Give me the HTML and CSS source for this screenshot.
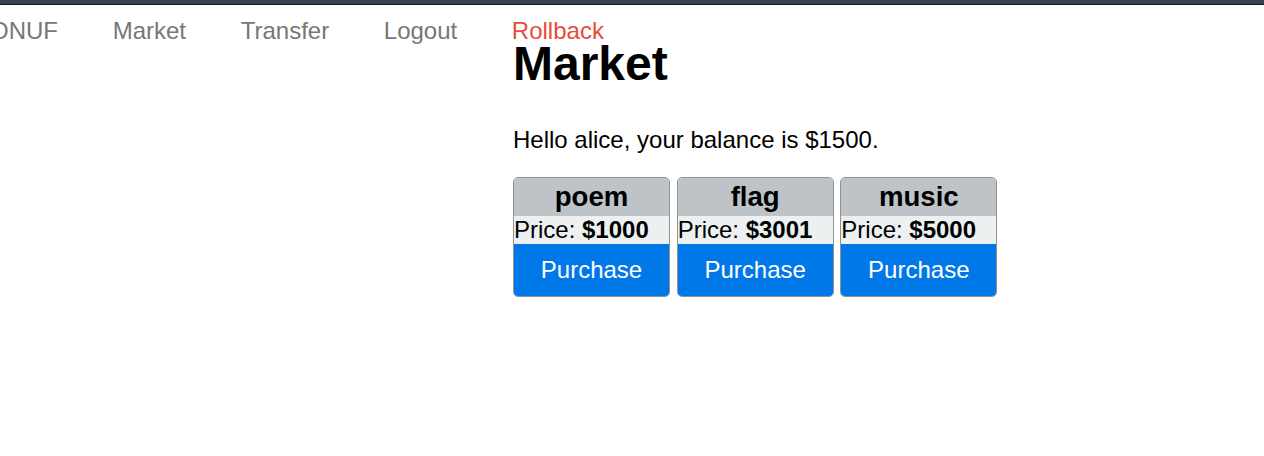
FILE: index.html
```html
<!DOCTYPE html>
<html lang="en">
<head>
    <meta charset="UTF-8">
    <meta name="viewport" content="width=device-width, initial-scale=1.0">
    <title>Market</title>
    <link rel="stylesheet" href="styles.css">
</head>
<body>
    <div class="topbar"></div>
    <nav class="menu">
        <a class="menu-link" href="#">ONUF</a>
        <a class="menu-link" href="#">Market</a>
        <a class="menu-link" href="#">Transfer</a>
        <a class="menu-link" href="#">Logout</a>
        <a class="menu-link rollback" href="#">Rollback</a>
    </nav>
    <div class="content">
        <h1>Market</h1>
        <p class="greeting">Hello alice, your balance is $1500.</p>
        <div class="items">
            <div class="item">
                <div class="item-name">poem</div>
                <div class="item-price">Price: <b>$1000</b></div>
                <button class="purchase">Purchase</button>
            </div>
            <div class="item">
                <div class="item-name">flag</div>
                <div class="item-price">Price: <b>$3001</b></div>
                <button class="purchase">Purchase</button>
            </div>
            <div class="item">
                <div class="item-name">music</div>
                <div class="item-price">Price: <b>$5000</b></div>
                <button class="purchase">Purchase</button>
            </div>
        </div>
    </div>
</body>
</html>
```

FILE: styles.css
```css
body {
    font-family: 'Liberation Sans', Arial, sans-serif;
    font-size: 24px;
    color: #000;
    background: #fff;
    margin: 0;
    position: relative;
    overflow: hidden;
}
.topbar {
    height: 4px;
    background: #37424e;
    border-bottom: 1px solid #15191d;
}
.menu {
    position: absolute;
    top: 5px;
    left: -10px;
    display: flex;
    gap: 54.67px;
    white-space: nowrap;
}
.menu-link {
    display: block;
    padding: 12px 0;
    color: #777;
    text-decoration: none;
}
.menu-link.rollback {
    color: #e74c3c;
}
.content {
    padding-left: 513px;
}
h1 {
    font-size: 48px;
    margin: 31px 0 35px;
}
.greeting {
    margin: 0 0 23px;
}
.items {
    display: flex;
    gap: 6.67px;
}
.item {
    width: 155px;
    display: flex;
    flex-direction: column;
    border: 1px solid #8f9396;
    border-radius: 5px;
    overflow: hidden;
}
.item-name {
    background: #bdc3c7;
    font-weight: bold;
    font-size: 27.6px;
    line-height: 38px;
    text-align: center;
}
.item-price {
    background: #ecf0f1;
}
.purchase {
    font-family: inherit;
    font-size: 24px;
    padding: 12px 0;
    border: none;
    background: #0078e7;
    color: #fff;
    cursor: pointer;
}
.purchase:hover {
    background: #006bd0;
}
```
